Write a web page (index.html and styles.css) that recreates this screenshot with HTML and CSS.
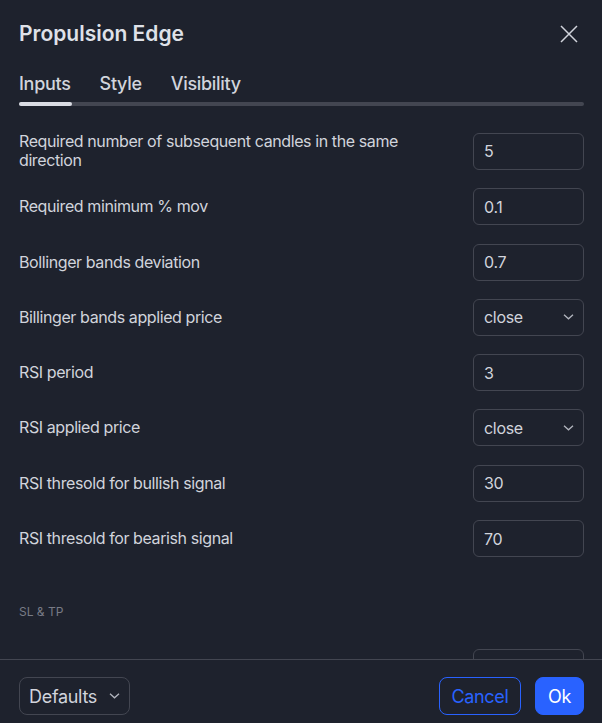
FILE: index.html
```html
<!DOCTYPE html>
<html lang="en">
<head>
  <meta charset="UTF-8" />
  <meta name="viewport" content="width=device-width, initial-scale=1.0">
  <title>Propulsion Edge</title>
  <link rel="stylesheet" href="styles.css">
</head>
<body>
  <div class="dialog">
    <div class="dialog-header">
      <h2 class="title">Propulsion Edge</h2>
      <button class="close-btn" aria-label="Close">
        <svg width="18" height="18" viewBox="0 0 18 18"><path d="M1 1L17 17M17 1L1 17" stroke="#d1d4dc" stroke-width="1.5" fill="none"/></svg>
      </button>
    </div>

    <div class="tabs">
      <div class="tab-list">
        <span class="tab active">Inputs</span>
        <span class="tab">Style</span>
        <span class="tab">Visibility</span>
      </div>
      <div class="tab-track"><div class="tab-indicator"></div></div>
    </div>

    <div class="content">
      <div class="row">
        <label class="row-label">Required number of subsequent candles in the same direction</label>
        <input class="field" type="text" value="5" />
      </div>
      <div class="row">
        <label class="row-label">Required minimum % mov</label>
        <input class="field" type="text" value="0.1" />
      </div>
      <div class="row">
        <label class="row-label">Bollinger bands deviation</label>
        <input class="field" type="text" value="0.7" />
      </div>
      <div class="row">
        <label class="row-label">Billinger bands applied price</label>
        <div class="field select">
          <span>close</span>
          <svg width="11" height="6" viewBox="0 0 11 6"><path d="M1 .8l4.5 4L10 .8" stroke="#b2b5be" stroke-width="1.3" fill="none"/></svg>
        </div>
      </div>
      <div class="row">
        <label class="row-label">RSI period</label>
        <input class="field" type="text" value="3" />
      </div>
      <div class="row">
        <label class="row-label">RSI applied price</label>
        <div class="field select">
          <span>close</span>
          <svg width="11" height="6" viewBox="0 0 11 6"><path d="M1 .8l4.5 4L10 .8" stroke="#b2b5be" stroke-width="1.3" fill="none"/></svg>
        </div>
      </div>
      <div class="row">
        <label class="row-label">RSI thresold for bullish signal</label>
        <input class="field" type="text" value="30" />
      </div>
      <div class="row">
        <label class="row-label">RSI thresold for bearish signal</label>
        <input class="field" type="text" value="70" />
      </div>

      <div class="section-title">SL &amp; TP</div>

      <!-- next row is scrolled below the footer -->
      <div class="row">
        <label class="row-label"></label>
        <input class="field" type="text" value="" />
      </div>
    </div>

    <div class="dialog-footer">
      <div class="defaults">
        <span>Defaults</span>
        <svg width="11" height="6" viewBox="0 0 11 6"><path d="M1 .8l4.5 4L10 .8" stroke="#b2b5be" stroke-width="1.3" fill="none"/></svg>
      </div>
      <div class="actions">
        <button class="btn btn-cancel">Cancel</button>
        <button class="btn btn-ok">Ok</button>
      </div>
    </div>
  </div>
</body>
</html>
```

FILE: styles.css
```css
:root {
  --bg-color: #1e222d;
  --text-color: #d1d4dc;
  --muted-color: #787b86;
  --border-color: #434651;
  --blue: #2962ff;
}

* {
  box-sizing: border-box;
}

body {
  margin: 0;
  background-color: var(--bg-color);
  color: var(--text-color);
  font-family: Inter, 'Noto Sans', Arial, sans-serif;
}

.dialog {
  height: 100vh;
  display: flex;
  flex-direction: column;
}

.dialog-header {
  display: flex;
  justify-content: space-between;
  align-items: center;
  padding: 20px 24px 0 19px;
}

.title {
  margin: 0;
  font-size: 21px;
  line-height: 28px;
  font-weight: 600;
  color: #dfe1e8;
}

.close-btn {
  background: none;
  border: none;
  padding: 0;
  width: 18px;
  height: 18px;
  cursor: pointer;
}

.tabs {
  padding: 24px 18px 0 19px;
}

.tab-list {
  display: flex;
  gap: 29px;
}

.tab {
  font-size: 18px;
  line-height: 24px;
  font-weight: 500;
  letter-spacing: -0.3px;
  color: var(--text-color);
}

.tab-track {
  margin-top: 6px;
  height: 4px;
  border-radius: 2px;
  background-color: var(--border-color);
}

.tab-indicator {
  width: 53px;
  height: 4px;
  border-radius: 2px;
  background-color: #dadce3;
}

.content {
  flex: 1;
  overflow: hidden;
  padding: 26px 18px 0 19px;
}

.row {
  display: flex;
  align-items: center;
  justify-content: space-between;
  min-height: 37px;
  margin-bottom: 18.3px;
}

.row-label {
  max-width: 400px;
  font-size: 16px;
  line-height: 19px;
  letter-spacing: -0.4px;
}

.field {
  width: 111px;
  height: 37px;
  flex-shrink: 0;
  padding: 0 10px;
  border: 1px solid var(--border-color);
  border-radius: 6px;
  background: transparent;
  color: var(--text-color);
  font-family: inherit;
  font-size: 16px;
  letter-spacing: -0.3px;
  outline: none;
}

.select {
  display: flex;
  align-items: center;
  justify-content: space-between;
  padding-right: 9px;
}

.section-title {
  margin: 47px 0 29px;
  font-size: 12px;
  line-height: 16px;
  color: var(--muted-color);
}

.dialog-footer {
  display: flex;
  justify-content: space-between;
  align-items: center;
  border-top: 1px solid var(--border-color);
  padding: 17px 18px 8px 19px;
}

.defaults {
  display: flex;
  align-items: center;
  justify-content: space-between;
  width: 111px;
  height: 38px;
  padding: 0 9px 0 9px;
  border: 1px solid var(--border-color);
  border-radius: 8px;
  font-size: 18px;
  letter-spacing: -0.3px;
}

.actions {
  display: flex;
  gap: 14px;
}

.btn {
  height: 38px;
  border-radius: 8px;
  font-family: inherit;
  font-size: 18px;
  letter-spacing: -0.3px;
  cursor: pointer;
}

.btn-cancel {
  width: 82px;
  background: transparent;
  border: 1px solid var(--blue);
  color: var(--blue);
}

.btn-ok {
  width: 49px;
  background-color: var(--blue);
  border: 1px solid var(--blue);
  color: white;
}
```
